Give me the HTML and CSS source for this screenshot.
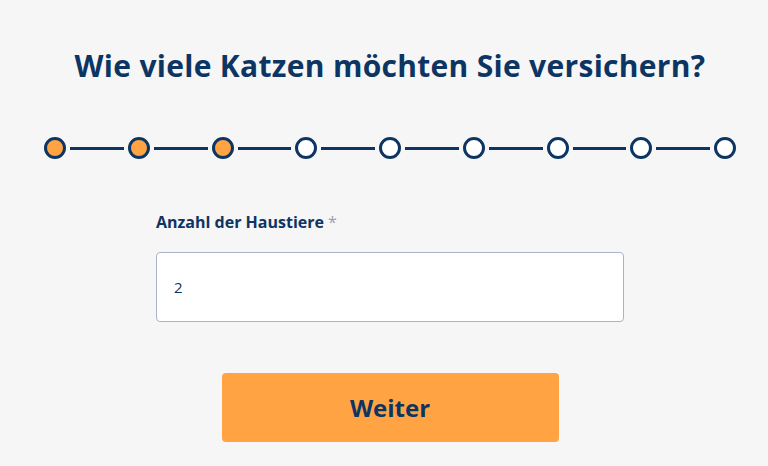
FILE: index.html
```html
<!DOCTYPE html>
<html lang="de">
<head>
<meta charset="utf-8">
<link rel="stylesheet" href="styles.css">
</head>
<body>
<main class="page">
  <h1 class="title">Wie viele Katzen möchten Sie versichern?</h1>
  <div class="steps">
    <span class="dot done"></span><span class="line"></span>
    <span class="dot done"></span><span class="line"></span>
    <span class="dot done"></span><span class="line"></span>
    <span class="dot"></span><span class="line"></span>
    <span class="dot"></span><span class="line"></span>
    <span class="dot"></span><span class="line"></span>
    <span class="dot"></span><span class="line"></span>
    <span class="dot"></span><span class="line"></span>
    <span class="dot"></span>
  </div>
  <form class="form">
    <label class="label" for="anzahl">Anzahl der Haustiere <span class="req">*</span></label>
    <input class="input" id="anzahl" type="text" value="2">
  </form>
  <button class="btn" type="button">Weiter</button>
</main>
</body>
</html>
```
FILE: styles.css
```css
* { box-sizing: border-box; }
html, body { margin: 0; padding: 0; }
body {
  background: #f6f6f6;
  font-family: "Open Sans", "Liberation Sans", sans-serif;
  color: #0d3563;
  width: 768px;
  height: 466px;
  overflow: hidden;
}
.page {
  display: flex;
  flex-direction: column;
  align-items: center;
  padding-left: 12px;
  padding-top: 45px;
}
.title {
  margin: 0;
  font-size: 30px;
  font-weight: 700;
  line-height: 42px;
  letter-spacing: 0.3px;
}
.steps {
  display: flex;
  align-items: center;
  width: 692px;
  margin-top: 50px;
}
.dot {
  width: 22px;
  height: 22px;
  border: 3px solid #0d3563;
  border-radius: 50%;
  background: #fff;
  flex: none;
}
.dot.done { background: #ffa343; }
.line {
  flex: 1;
  height: 3px;
  background: #0d3563;
  margin: 0 4px;
}
.form {
  display: flex;
  flex-direction: column;
  width: 468px;
  margin-top: 52px;
}
.label {
  font-size: 16px;
  font-weight: 700;
  line-height: 22px;
}
.req { color: #9aa0aa; font-weight: 400; }
.input {
  margin-top: 19px;
  height: 70px;
  border: 1px solid #a9b4cc;
  border-radius: 4px;
  background: #fff;
  padding: 0 17px;
  font-family: inherit;
  font-size: 15px;
  color: #0d3563;
  outline: none;
}
.btn {
  margin-top: 51px;
  width: 337px;
  height: 69px;
  border: none;
  border-radius: 4px;
  background: #ffa343;
  color: #0d3563;
  font-family: inherit;
  font-size: 24px;
  font-weight: 700;
}
```
